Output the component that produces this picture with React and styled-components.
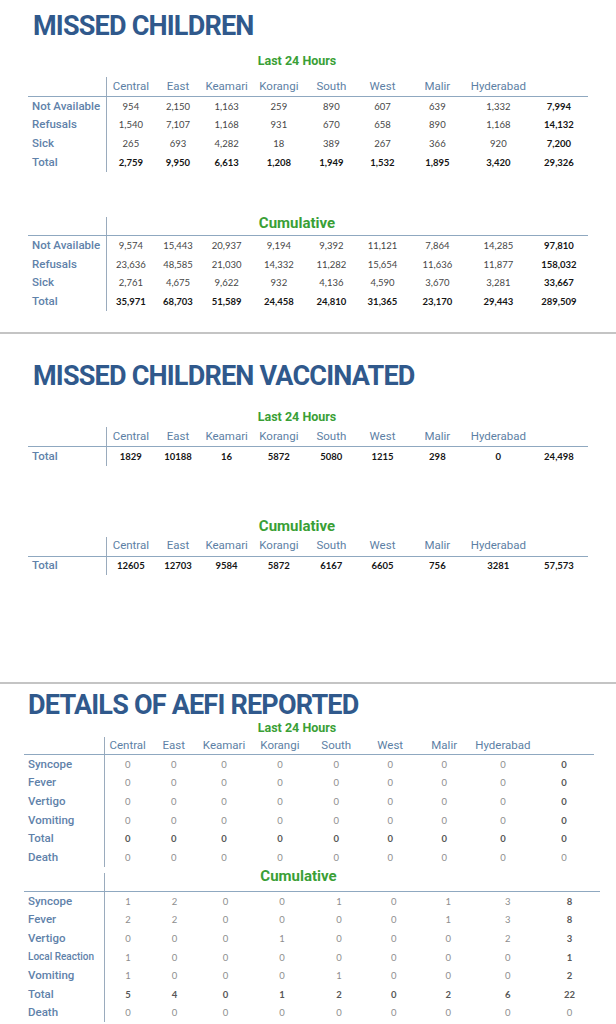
import React from "react";
import styled, { createGlobalStyle } from "styled-components";

const DISTRICTS = ["Central", "East", "Keamari", "Korangi", "South", "West", "Malir", "Hyderabad"];

// column templates: label column + 8 districts + total
const MAIN_COLS = "79px 47.75fr 46.5fr 50.75fr 53.75fr 51.25fr 51fr 58.75fr 63.25fr 58fr";
const AEFI_COLS = "81px 45.4fr 46.6fr 54.2fr 57.4fr 55.3fr 52.6fr 55.4fr 62fr 60.1fr";

const TONES = {
  dark: { regular: "#474747", bold: "#151515" },
  light: { regular: "#8e8e8e", bold: "#575757" },
};

const missedLast24 = [
  { label: "Not Available", values: ["954", "2,150", "1,163", "259", "890", "607", "639", "1,332", "7,994"] },
  { label: "Refusals", values: ["1,540", "7,107", "1,168", "931", "670", "658", "890", "1,168", "14,132"] },
  { label: "Sick", values: ["265", "693", "4,282", "18", "389", "267", "366", "920", "7,200"] },
  { label: "Total", bold: true, values: ["2,759", "9,950", "6,613", "1,208", "1,949", "1,532", "1,895", "3,420", "29,326"] },
];

const missedCumulative = [
  { label: "Not Available", values: ["9,574", "15,443", "20,937", "9,194", "9,392", "11,121", "7,864", "14,285", "97,810"] },
  { label: "Refusals", values: ["23,636", "48,585", "21,030", "14,332", "11,282", "15,654", "11,636", "11,877", "158,032"] },
  { label: "Sick", values: ["2,761", "4,675", "9,622", "932", "4,136", "4,590", "3,670", "3,281", "33,667"] },
  { label: "Total", bold: true, values: ["35,971", "68,703", "51,589", "24,458", "24,810", "31,365", "23,170", "29,443", "289,509"] },
];

const vaccinatedLast24 = [
  { label: "Total", bold: true, values: ["1829", "10188", "16", "5872", "5080", "1215", "298", "0", "24,498"] },
];

const vaccinatedCumulative = [
  { label: "Total", bold: true, values: ["12605", "12703", "9584", "5872", "6167", "6605", "756", "3281", "57,573"] },
];

const zeros = Array(9).fill("0");

const aefiLast24 = [
  { label: "Syncope", values: zeros },
  { label: "Fever", values: zeros },
  { label: "Vertigo", values: zeros },
  { label: "Vomiting", values: zeros },
  { label: "Total", bold: true, values: zeros },
  { label: "Death", plainTotal: true, values: zeros },
];

const aefiCumulative = [
  { label: "Syncope", values: ["1", "2", "0", "0", "1", "0", "1", "3", "8"] },
  { label: "Fever", values: ["2", "2", "0", "0", "0", "0", "1", "3", "8"] },
  { label: "Vertigo", values: ["0", "0", "0", "1", "0", "0", "0", "2", "3"] },
  { label: "Local Reaction", small: true, values: ["1", "0", "0", "0", "0", "0", "0", "0", "1"] },
  { label: "Vomiting", values: ["1", "0", "0", "0", "1", "0", "0", "0", "2"] },
  { label: "Total", bold: true, values: ["5", "4", "0", "1", "2", "0", "2", "6", "22"] },
  { label: "Death", plainTotal: true, values: zeros },
];

function DataTable({ cols, width, left, mt, headH, rowH, rows, tone, caption }) {
  const colors = TONES[tone];
  return (
    <Table $width={width} $left={left} $mt={mt}>
      <HeadRow $cols={cols} $h={headH}>
        <Corner />
        {caption ? (
          <HeadCaption $shift={caption.shift} $lh={caption.lh} $mt={caption.mt}>
            Cumulative
          </HeadCaption>
        ) : (
          DISTRICTS.map((d) => <HeadCell key={d}>{d}</HeadCell>)
        )}
        {!caption && <span />}
      </HeadRow>
      {rows.map((row) => (
        <Row key={row.label} $cols={cols} $h={rowH}>
          <RowLabel $small={row.small}>{row.label}</RowLabel>
          {row.values.map((v, i) => {
            const isTotalCol = i === row.values.length - 1;
            const bold = row.bold || (isTotalCol && !row.plainTotal);
            return (
              <Value key={i} $bold={bold} $color={bold ? colors.bold : colors.regular}>
                {v}
              </Value>
            );
          })}
        </Row>
      ))}
    </Table>
  );
}

export default function App() {
  return (
    <Page>
      <GlobalStyle />

      <Section $pb={20.6} $divider>
        <Title $mt={10} $lh={32} $indent={33}>MISSED CHILDREN</Title>
        <Caption $mt={11} $lh={16} $size={12.5}>Last 24 Hours</Caption>
        <DataTable cols={MAIN_COLS} width={560} left={28} mt={8} headH={19} rowH={18.8} rows={missedLast24} tone="dark" />
        <DataTable
          cols={MAIN_COLS}
          width={560}
          left={28}
          mt={45}
          headH={18}
          rowH={18.8}
          rows={missedCumulative}
          tone="dark"
          caption={{ shift: 101, lh: 12, mt: 0 }}
        />
      </Section>

      <Section $pb={106.5} $divider>
        <Title $mt={26.5} $lh={32} $indent={33}>MISSED CHILDREN VACCINATED</Title>
        <Caption $mt={16.8} $lh={16} $size={12.5}>Last 24 Hours</Caption>
        <DataTable cols={MAIN_COLS} width={560} left={28} mt={1.7} headH={19} rowH={18.8} rows={vaccinatedLast24} tone="dark" />
        <Caption $mt={51.2} $lh={18} $size={15}>Cumulative</Caption>
        <DataTable cols={MAIN_COLS} width={560} left={28} mt={1.7} headH={19} rowH={18.8} rows={vaccinatedCumulative} tone="dark" />
      </Section>

      <Section $pb={0}>
        <Title $mt={7} $lh={28} $indent={28}>DETAILS OF AEFI REPORTED</Title>
        <Caption $mt={1.7} $lh={14} $size={12.5}>Last 24 Hours</Caption>
        <DataTable cols={AEFI_COLS} width={570} left={24} mt={2.3} headH={17.5} rowH={18.54} rows={aefiLast24} tone="light" />
        <DataTable
          cols={AEFI_COLS}
          width={576}
          left={24}
          mt={6.3}
          headH={18.5}
          rowH={18.54}
          rows={aefiCumulative}
          tone="light"
          caption={{ shift: 108, lh: 14, mt: -4 }}
        />
      </Section>
    </Page>
  );
}

const GlobalStyle = createGlobalStyle`
  html, body {
    margin: 0;
    padding: 0;
    background: #ffffff;
    font-family: Roboto, "Liberation Sans", sans-serif;
  }
`;

const Page = styled.div`
  width: 616px;
  overflow: hidden;
`;

const Section = styled.section`
  padding-bottom: ${(p) => p.$pb}px;
  border-bottom: ${(p) => (p.$divider ? "2px solid #c4c4c4" : "none")};
`;

const Title = styled.h1`
  margin: ${(p) => p.$mt}px 0 0 ${(p) => p.$indent}px;
  font: 700 27px / ${(p) => p.$lh}px Roboto, sans-serif;
  letter-spacing: -0.8px;
  color: #30598c;
  white-space: nowrap;
`;

const Caption = styled.div`
  width: 594px;
  margin-top: ${(p) => p.$mt}px;
  text-align: center;
  font: 700 ${(p) => p.$size}px / ${(p) => p.$lh}px Roboto, sans-serif;
  color: #3a9f36;
`;

const Table = styled.div`
  width: ${(p) => p.$width}px;
  margin: ${(p) => p.$mt}px 0 0 ${(p) => p.$left}px;
`;

const HeadRow = styled.div`
  display: grid;
  grid-template-columns: ${(p) => p.$cols};
  height: ${(p) => p.$h}px;
  border-bottom: 1px solid #8fa8c0;
`;

const Corner = styled.div`
  border-right: 1px solid #9aabbd;
`;

const HeadCell = styled.div`
  display: flex;
  align-items: center;
  justify-content: center;
  font: 400 11.5px / 1 Roboto, sans-serif;
  color: #5d7fa5;
  white-space: nowrap;
`;

const HeadCaption = styled.div`
  grid-column: 2 / -1;
  align-self: start;
  margin-top: ${(p) => p.$mt}px;
  padding-right: ${(p) => p.$shift}px;
  text-align: center;
  font: 700 15px / ${(p) => p.$lh}px Roboto, sans-serif;
  color: #3a9f36;
`;

const Row = styled.div`
  display: grid;
  grid-template-columns: ${(p) => p.$cols};
  height: ${(p) => p.$h}px;
`;

const RowLabel = styled.div`
  display: flex;
  align-items: center;
  padding-left: 4px;
  border-right: 1px solid #9aabbd;
  font: 500 ${(p) => (p.$small ? 10 : 11.5)}px / 1 Roboto, sans-serif;
  color: #5f82aa;
  white-space: nowrap;
`;

const Value = styled.div`
  display: flex;
  align-items: center;
  justify-content: center;
  font: ${(p) => (p.$bold ? 700 : 400)} 9.5px / 1 Lato, sans-serif;
  color: ${(p) => p.$color};
  white-space: nowrap;
`;
